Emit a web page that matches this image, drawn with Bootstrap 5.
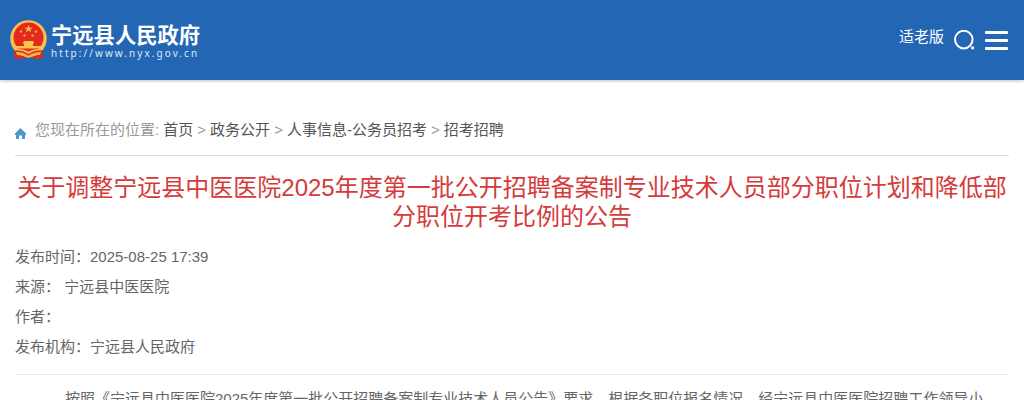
<!DOCTYPE html>
<html lang="zh-CN">
<head>
    <meta charset="UTF-8">
    <meta name="viewport" content="width=device-width, initial-scale=1">
    <title>宁远县人民政府</title>
    <!-- Bootstrap CSS -->
    <link href="https://cdn.jsdelivr.net/npm/bootstrap@5.3.0/dist/css/bootstrap.min.css" rel="stylesheet">
    <style>
        body {
            font-family: "Liberation Sans", "Noto Sans CJK SC", sans-serif;
            font-size: 15px;
            line-height: 30px;
            color: #666;
            height: 400px;
            overflow: hidden;
        }
        .site-header {
            height: 80px;
            padding: 0 16px 0 10px;
            background: #2366b4;
            box-shadow: 0 1px 3px rgba(0, 0, 0, .25);
        }
        .site-name {
            font-size: 21.3px;
            line-height: 24px;
            font-weight: 700;
            padding-top: 2px;
        }
        .site-url {
            font-family: "Noto Sans", sans-serif;
            font-size: 10px;
            line-height: 11px;
            letter-spacing: 2.05px;
            color: #dce9f7;
        }
        .site-brand { gap: 4px; }
        .site-tools { gap: 10px; }
        .elder-link { line-height: 22px; margin-bottom: 7px; }
        .page-content { padding: 35px 15px 0; }
        .location {
            height: 41px;
            border-bottom: 1px solid #ddd;
            color: #999;
            word-spacing: -.12px;
        }
        .location a { color: #555; }
        .location svg { margin: 7px 9px 0 0; }
        .article-title {
            margin: 17px 0 11px;
            font-size: 24px;
            line-height: 29px;
            font-weight: 400;
            color: #d53b3b;
        }
        .article-info {
            padding-bottom: 12px;
            border-bottom: 1px solid #eaeaea;
        }
        .article-body {
            padding: 9px 20px 0;
            text-indent: 30px;
        }
    </style>
</head>
<body>
    <header class="site-header d-flex justify-content-between align-items-center text-white">
        <a href="#" class="site-brand d-flex align-items-center text-white text-decoration-none">
            <!-- 国徽 -->
            <svg width="37" height="40" viewBox="0 0 37 40">
                <path d="M5 27L4 38l6 1 8-2 9 2 6-1-1-11z" fill="#d92b20"/>
                <circle cx="18.5" cy="18.5" r="18.3" fill="#f4c052"/>
                <circle cx="18.5" cy="17.5" r="15" fill="#e52a1d"/>
                <path d="M18.5 5l1.100 2.700h3l-2.400 1.800.9 2.800-2.600-1.700-2.600 1.700.9-2.800-2.400-1.800h3z" fill="#f9c64d"/>
                <g fill="#f2a43b">
                    <circle cx="11" cy="11.5" r="1.2"/>
                    <circle cx="26" cy="11.5" r="1.2"/>
                    <circle cx="14.5" cy="15.5" r="1.2"/>
                    <circle cx="22.5" cy="15.5" r="1.2"/>
                </g>
                <path d="M14 21h9l1.500 2.500H23V26h9v2.500H5V26h9v-2.500h-1.500z" fill="#f9c64d"/>
                <path d="M5 29q7-1 13.500 2.500Q25 28 32 29l-2 6q-6 0-11.500 3Q13 35 7 35z" fill="#f2b64a"/>
                <path d="M4 31.500q8-1 14.500 3.500Q25 30.500 33 31.500" fill="none" stroke="#d92b20" stroke-width="1.500"/>
                <path d="M5 35q7 0 9.500 2.500L10 39l-6-1zM32 35q-7 0-9.500 2.500L27 39l6-1z" fill="#d92b20"/>
            </svg>
            <span class="d-flex flex-column">
                <span class="site-name">宁远县人民政府</span>
                <span class="site-url">http://www.nyx.gov.cn</span>
            </span>
        </a>
        <div class="site-tools d-flex align-items-center">
            <a href="#" class="elder-link text-white text-decoration-none">适老版</a>
            <svg width="21" height="20" viewBox="0 0 21 20">
                <circle cx="9.800" cy="9.600" r="8.800" fill="none" stroke="#fff" stroke-width="2"/>
                <circle cx="18.600" cy="17.800" r="1.600" fill="#fff"/>
            </svg>
            <svg width="23" height="20" viewBox="0 0 23 20" fill="#fff">
                <rect y="1" width="23" height="3" rx="1"/>
                <rect y="9" width="23" height="3" rx="1"/>
                <rect y="17" width="23" height="3" rx="1"/>
            </svg>
        </div>
    </header>

    <main class="page-content">
        <nav class="location d-flex align-items-start">
            <svg width="11" height="30" viewBox="0 0 11 30">
                <path d="M5.500 6L0 11.500V13h1v4h3v-3.500h3V17h3v-4h1v-1.500z" fill="#4d97c9"/>
            </svg>
            <div>
                您现在所在的位置:
                <a href="#" class="text-decoration-none">首页</a> &gt;
                <a href="#" class="text-decoration-none">政务公开</a> &gt;
                <a href="#" class="text-decoration-none">人事信息-公务员招考</a> &gt;
                <a href="#" class="text-decoration-none">招考招聘</a>
            </div>
        </nav>

        <h1 class="article-title text-center">关于调整宁远县中医医院2025年度第一批公开招聘备案制专业技术人员部分职位计划和降低部分职位开考比例的公告</h1>

        <div class="article-info">
            <div>发布时间：2025-08-25 17:39</div>
            <div>来源： 宁远县中医医院</div>
            <div>作者：</div>
            <div>发布机构：宁远县人民政府</div>
        </div>

        <div class="article-body">按照《宁远县中医医院2025年度第一批公开招聘备案制专业技术人员公告》要求，根据各职位报名情况，经宁远县中医医院招聘工作领导小组</div>
    </main>

    <!-- Bootstrap JS -->
    <script src="https://cdn.jsdelivr.net/npm/bootstrap@5.3.0/dist/js/bootstrap.bundle.min.js"></script>
</body>
</html>
